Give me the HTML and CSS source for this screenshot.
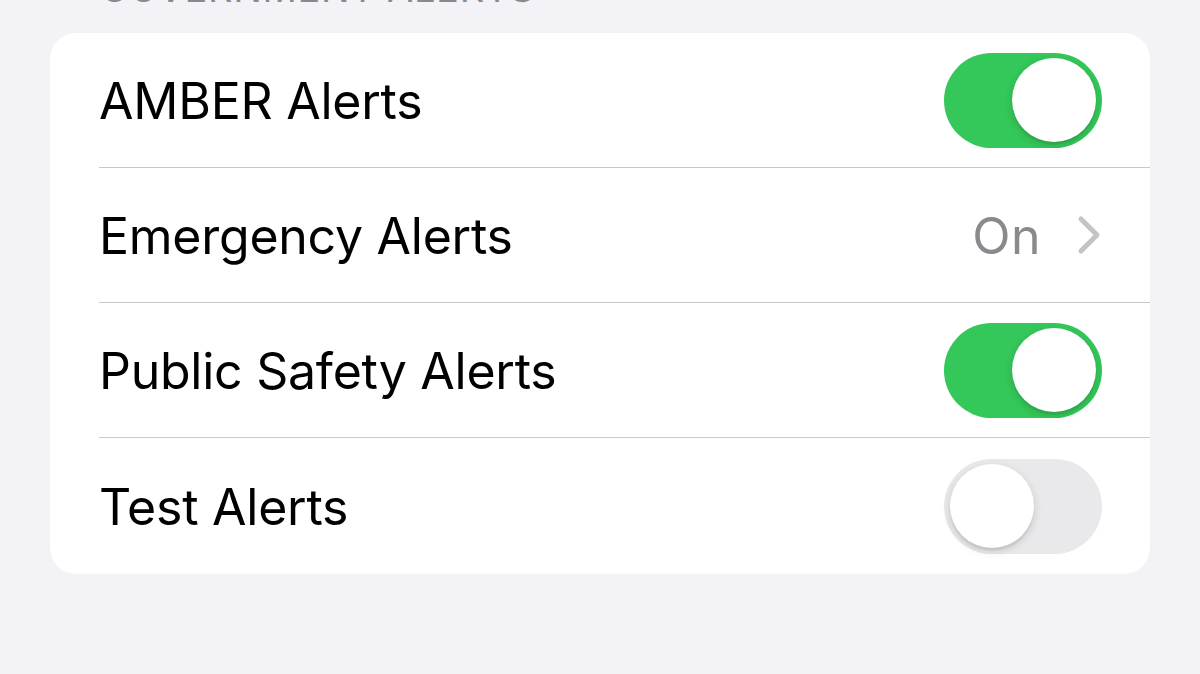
FILE: index.html
```html
<!DOCTYPE html>
<html>
<head>
<meta charset="utf-8">
<link rel="stylesheet" href="styles.css">
</head>
<body>
<div class="page">
  <div class="section-header">GOVERNMENT ALERTS</div>
  <div class="card">
    <div class="row">
      <span class="label">AMBER Alerts</span>
      <span class="toggle on"><span class="knob"></span></span>
    </div>
    <div class="row">
      <span class="label">Emergency Alerts</span>
      <span class="detail">
        <span class="value">On</span>
        <svg class="chevron" width="24" height="40" viewBox="0 0 24 40"><path d="M4 4 L20 20 L4 36" fill="none" stroke="#c4c4c7" stroke-width="5" stroke-linecap="round" stroke-linejoin="round"/></svg>
      </span>
    </div>
    <div class="row">
      <span class="label">Public Safety Alerts</span>
      <span class="toggle on"><span class="knob"></span></span>
    </div>
    <div class="row">
      <span class="label">Test Alerts</span>
      <span class="toggle off"><span class="knob"></span></span>
    </div>
  </div>
</div>
</body>
</html>
```

FILE: styles.css
```css
html, body {
  margin: 0;
  padding: 0;
  background: #f2f2f7;
}
.page {
  width: 1200px;
  height: 674px;
  overflow: hidden;
  font-family: Inter, "Noto Sans", sans-serif;
}
.section-header {
  margin-top: -31px;
  height: 64px;
  padding-left: 100px;
  font-size: 38px;
  line-height: 38px;
  color: #8a8a8e;
  letter-spacing: 0.7px;
}
.card {
  margin: 0 50px;
  background: #ffffff;
  border-radius: 26px;
  overflow: hidden;
}
.row {
  height: 135px;
  margin-left: 49px;
  padding-right: 48px;
  display: flex;
  align-items: center;
  justify-content: space-between;
  border-bottom: 1px solid #c8c8cb;
  box-sizing: border-box;
}
.row:last-child {
  border-bottom: none;
  height: 136px;
}
.label {
  font-size: 50px;
  color: #000;
  letter-spacing: -0.25px;
  padding-top: 2px;
}
.detail {
  display: flex;
  align-items: center;
  gap: 36px;
}
.value {
  font-size: 50px;
  color: #8a8a8e;
  letter-spacing: 0.5px;
  padding-top: 2px;
}
.chevron {
  display: block;
  margin-right: 1px;
}
.toggle {
  width: 158px;
  height: 95px;
  border-radius: 48px;
  display: flex;
  align-items: center;
  padding: 0 6px;
  box-sizing: border-box;
}
.toggle.on {
  background: #34c759;
  justify-content: flex-end;
}
.toggle.off {
  background: #e9e9eb;
  justify-content: flex-start;
}
.knob {
  width: 84px;
  height: 84px;
  border-radius: 50%;
  background: #fff;
  box-shadow: 0 3px 8px rgba(0,0,0,0.15), 0 3px 1px rgba(0,0,0,0.06);
}
```
